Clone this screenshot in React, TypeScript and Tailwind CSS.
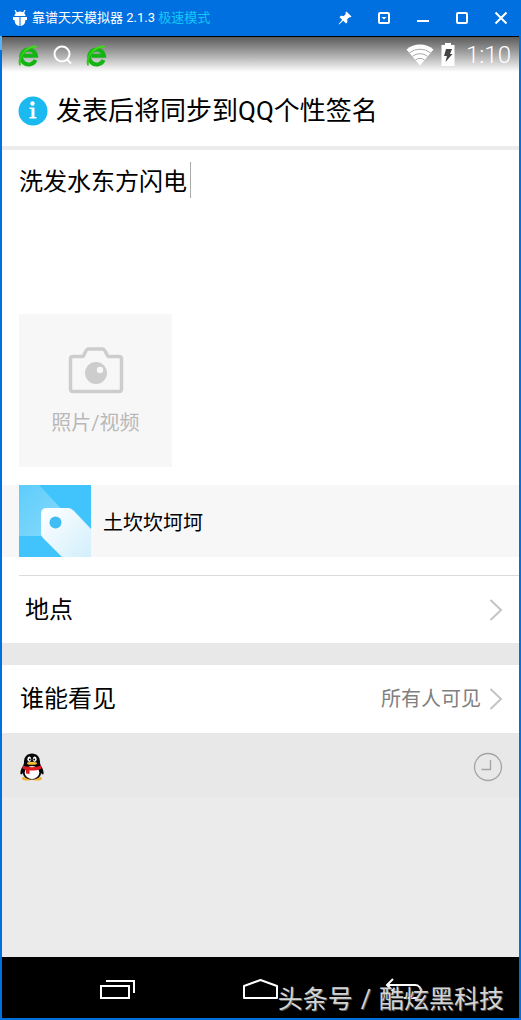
import { useState } from "react";

const BrowserIcon = () => (
  <svg viewBox="0 0 22 24" className="w-[22px] h-6" fill="none">
    <path d="M18.500 17A7.500 7.500 0 1 1 19 12.800H6.500" stroke="#14b414" strokeWidth="4" />
    <path d="M4 13c1-5 6-9 13-10.500 2-.4 3.500.2 3 2-1 0-6 .2-10 3C7 9.500 5 12.500 4 16z" fill="#3fdc1c" />
    <path d="M2.200 22.500C.5 17 3 9.500 10 5.500 6 9.500 3.500 14.500 3.800 22.500z" fill="#2cc81a" />
  </svg>
);

const Chevron = () => (
  <svg viewBox="0 0 14 22" className="w-[14px] h-[22px]" fill="none" stroke="#c4c4c4" strokeWidth="2">
    <path d="M1.500 1l10.500 10-10.500 10" />
  </svg>
);

function TitleBar() {
  return (
    <header className="h-9 flex items-center justify-between px-2.5 text-white">
      <div className="flex items-center">
        <svg viewBox="0 0 16 18" className="w-4 h-[18px] mr-1" fill="#fff">
          <path d="M2.500 1l1 0 1.600 2.300a6 6 0 0 1 5.800 0L12.500 1l1 0-1.300 3.200c.9.8 1.300 1.800 1.300 2.800h-11c0-1 .4-2 1.300-2.800z" />
          <path d="M1 8h6.500v9C4 16.500 2.800 14.500 2.600 11H1zM15 8H8.500v9c3.500-.5 4.700-2.500 4.900-6H15z" />
        </svg>
        <h1 className="text-[13px] leading-5">
          靠谱天天模拟器 2.1.3 <span className="text-[#12c8f8]">极速模式</span>
        </h1>
      </div>
      <div className="flex items-center gap-[23px]">
        <button aria-label="置顶" className="w-4 h-4">
          <svg viewBox="0 0 16 16" fill="#fff">
            <path d="M9.500 1.500l5 5-1.300 1-1-.3-2 2 .2 3-1.400 1.400-2.800-2.800-4.200 3.700-.4-.4L5.200 9.800 2.500 7.200l1.300-1.500 3 .2 2-2-.4-1.200z" />
          </svg>
        </button>
        <button aria-label="菜单" className="w-4 h-4">
          <svg viewBox="0 0 16 16" fill="none" stroke="#fff" strokeWidth="2">
            <rect x="3" y="3" width="10" height="10" rx="1" />
            <path d="M5.500 7h5L8 9.500z" fill="#fff" stroke="none" />
          </svg>
        </button>
        <button aria-label="最小化" className="w-4 h-4">
          <svg viewBox="0 0 16 16" fill="none" stroke="#fff" strokeWidth="2">
            <path d="M2 11h12" />
          </svg>
        </button>
        <button aria-label="最大化" className="w-4 h-4">
          <svg viewBox="0 0 16 16" fill="none" stroke="#fff" strokeWidth="2">
            <rect x="3" y="3" width="10" height="10" rx="1" />
          </svg>
        </button>
        <button aria-label="关闭" className="w-4 h-4">
          <svg viewBox="0 0 16 16" fill="none" stroke="#fff" strokeWidth="2">
            <path d="M2.500 2.500l11 11M13.500 2.500l-11 11" />
          </svg>
        </button>
      </div>
    </header>
  );
}

function StatusBar() {
  return (
    <div className="h-9 border-t border-black bg-linear-to-b from-[#5c5c5c] to-white flex items-center justify-between pl-[15px] pr-2">
      <div className="flex items-center gap-3">
        <BrowserIcon />
        <svg viewBox="0 0 22 22" className="w-[22px] h-[22px]" fill="none" stroke="#fff" strokeWidth="2">
          <circle cx="11" cy="10" r="7.500" />
          <path d="M16 15.500l4 4" />
        </svg>
        <BrowserIcon />
      </div>
      <div className="flex items-center">
        <svg viewBox="0 0 28 22" className="w-7 h-[22px] mr-1.5">
          <path d="M.5 5.500a21 21 0 0 1 27 0L14 21.500z" fill="#fff" />
          <path d="M3.500 8.800a17 17 0 0 1 21 0M6.500 12.300a12 12 0 0 1 15 0M9.500 16a7 7 0 0 1 9 0" fill="none" stroke="#aaa" strokeWidth="1" />
        </svg>
        <svg viewBox="0 0 16 23" className="w-4 h-[23px] mr-2.5">
          <path d="M5 0h6v2h3.500v21h-13V2H5z" fill="#fff" />
          <path d="M6 6h6l-2 5h2.500L5.500 19l1.500-6H4z" fill="#444" />
        </svg>
        <time className="text-2xl leading-8 font-light text-white">1:10</time>
      </div>
    </div>
  );
}

function SyncNotice() {
  return (
    <div className="h-[78px] flex items-center pl-4 pt-1 border-b-4 border-[#ececec]">
      <svg viewBox="0 0 30 30" className="w-[30px] h-[30px] mr-2">
        <circle cx="15" cy="15" r="14.500" fill="#1abaf0" />
        <circle cx="14.500" cy="7.500" r="2.200" fill="#fff" />
        <path d="M11.500 11.500h5v9.500h2v1.500h-7V21h2v-8h-2z" fill="#fff" />
      </svg>
      <p className="text-[26px] leading-9">发表后将同步到QQ个性签名</p>
    </div>
  );
}

function Composer() {
  const [text, setText] = useState("洗发水东方闪电");

  return (
    <div className="pl-[17px] bg-white">
      <div className="relative pt-3.5">
        <textarea
          aria-label="说说内容"
          value={text}
          onChange={(e) => setText(e.target.value)}
          className="block w-full h-[150px] resize-none outline-none text-2xl leading-9"
        />
        {/* Caret */}
        <span className="absolute left-[171px] top-3 w-px h-9 bg-[#aaa]" />
      </div>
      <button className="w-[153px] h-[153px] bg-[#f7f7f7] flex flex-col items-center justify-center gap-3.5 text-[#b9b9b9]">
        <svg viewBox="0 0 56 50" className="w-14 h-[50px]" fill="none" stroke="#cdcdcd" strokeWidth="3.500">
          <path d="M5 11.500h9.500c2 0 2.500-7.500 6-7.500h14c3.500 0 4 7.500 6 7.500H51c1.500 0 2.500 1 2.500 2.500v30c0 1.500-1 2.500-2.500 2.500H5c-1.500 0-2.500-1-2.500-2.500V14c0-1.500 1-2.500 2.500-2.500z" />
          <circle cx="28" cy="28" r="11" fill="#cdcdcd" stroke="none" />
          <circle cx="32" cy="25" r="3.200" fill="#f7f7f7" stroke="none" />
        </svg>
        <span className="text-xl leading-7">照片/视频</span>
      </button>
    </div>
  );
}

function TagRow() {
  return (
    <div className="bg-white py-[18px]">
      <div className="h-[72px] pl-[17px] flex items-center bg-[#f7f7f7]">
        <svg viewBox="0 0 72 72" className="w-[72px] h-[72px] mr-3">
          <defs>
            <linearGradient id="tag" x1="0" y1="0" x2="1" y2="1">
              <stop offset="0" stopColor="#fff" />
              <stop offset="1" stopColor="#d2effc" />
            </linearGradient>
            <linearGradient id="shine" x1="0" y1="0" x2="1" y2="1">
              <stop offset="0" stopColor="#5ccdfb" />
              <stop offset="1" stopColor="#8cdafb" />
            </linearGradient>
          </defs>
          <path d="M0 0h72v72H0z" fill="#40c4fb" />
          <path d="M0 0h20l30 32-18 19H0z" fill="url(#shine)" />
          <path d="M28 23h20c3 0 5 1 7 3l17 18v28H43L24 53c-2-2-2-4-2-6V29c0-4 2-6 6-6z" fill="url(#tag)" />
          <circle cx="36.500" cy="37.500" r="6" fill="#40bdf2" />
        </svg>
        <span className="pt-1 text-xl leading-7">土坎坎坷坷</span>
      </div>
    </div>
  );
}

function QQPenguin() {
  return (
    <svg viewBox="0 0 24 28" className="w-6 h-7">
      <ellipse cx="7" cy="25.500" rx="5" ry="2" fill="#f2b23c" />
      <ellipse cx="17" cy="25.500" rx="5" ry="2" fill="#f2b23c" />
      <path d="M12 .5c5 0 8 3.500 8 8.500 0 1 .2 2 .6 3 2 3.500 3.400 6 2.900 9-.5 1-1.700.3-2.500-1 0 4-4 6.500-9 6.500S3 24 3 20c-.8 1.300-2 2-2.500 1-.5-3 .9-5.500 2.900-9 .4-1 .6-2 .6-3C4 4 7 .5 12 .5z" fill="#080808" />
      <ellipse cx="12" cy="19.500" rx="7.300" ry="6.500" fill="#fff" />
      <ellipse cx="9.300" cy="6.300" rx="1.900" ry="2.700" fill="#fff" />
      <ellipse cx="14.700" cy="6.300" rx="1.900" ry="2.700" fill="#fff" />
      <circle cx="9.800" cy="6.500" r=".9" />
      <circle cx="14.200" cy="6.500" r=".9" />
      <ellipse cx="12" cy="10.300" rx="5" ry="1.500" fill="#f6c232" />
      <path d="M3 12.500c5.500 2.300 12.500 2.300 18 0l.5 3c-4 2-8 2.300-12 2v3.500l-3.500-.5V17l-3.500-1.500z" fill="#e01c20" />
    </svg>
  );
}

function NavBar() {
  return (
    <nav className="relative h-[61px] bg-black flex items-center justify-between pl-[97px] pr-24 pt-0.5">
      <button aria-label="最近任务">
        <svg viewBox="0 0 36 22" className="w-9 h-[22px]" fill="none" stroke="#fff" strokeWidth="2">
          <path d="M2 8h28v12H2zM7 3h28v12" />
        </svg>
      </button>
      <button aria-label="主页">
        <svg viewBox="0 0 36 22" className="w-9 h-[22px]" fill="none" stroke="#fff" strokeWidth="2" strokeLinejoin="round">
          <path d="M2 20V8l16.500-6L35 8v12z" />
        </svg>
      </button>
      <button aria-label="返回">
        <svg viewBox="0 0 38 22" className="w-[38px] h-[22px]" fill="none" stroke="#fff" strokeWidth="2">
          <path d="M8 1L2 7l6 6M2 7h28c8 0 8 13 0 13H14" />
        </svg>
      </button>
      <p className="absolute right-[15px] bottom-0 flex gap-2 text-[25px] leading-9 text-[#d4d4d4] text-shadow-[1px_1px_0_#555] pointer-events-none">
        <span>头条号</span>
        <span>/</span>
        <span>酷炫黑科技</span>
      </p>
    </nav>
  );
}

export default function App() {
  return (
    <div className="relative min-h-screen flex flex-col bg-[#006fe0] px-0.5 pb-0.5 text-black font-['Roboto','Noto_Sans_CJK_SC',sans-serif]">
      <TitleBar />
      <span className="absolute left-0 top-9 w-0.5 h-3.5 bg-[#58b4f8]" />
      <main className="flex-1 flex flex-col bg-[#ebebeb]">
        <div className="bg-white">
          <StatusBar />
          <SyncNotice />
        </div>
        <Composer />
        <TagRow />
        <div className="bg-white pl-[17px]">
          <button className="w-full h-[68px] flex items-center justify-between border-t border-[#dcdcdc] pl-1.5 pr-4">
            <span className="text-2xl leading-9">地点</span>
            <Chevron />
          </button>
        </div>
        <div className="h-[22px] bg-[#e8e8e8]" />
        <button className="h-[68px] flex items-center justify-between bg-white pl-[18px] pr-4">
          <span className="text-2xl leading-9">谁能看见</span>
          <span className="flex items-center gap-2 text-xl leading-7 text-[#808080]">
            所有人可见
            <Chevron />
          </span>
        </button>
        <div className="h-16 flex items-center justify-between bg-[#e8e8e8] pl-[18px] pr-4 pt-1">
          <button aria-label="QQ">
            <QQPenguin />
          </button>
          <button aria-label="定时发表">
            <svg viewBox="0 0 30 30" className="w-[30px] h-[30px]" fill="none" stroke="#a5a5a5" strokeWidth="1.300">
              <circle cx="15" cy="15" r="13.500" />
              <path d="M17.500 8v9.500H8.500" />
            </svg>
          </button>
        </div>
      </main>
      <NavBar />
    </div>
  );
}
